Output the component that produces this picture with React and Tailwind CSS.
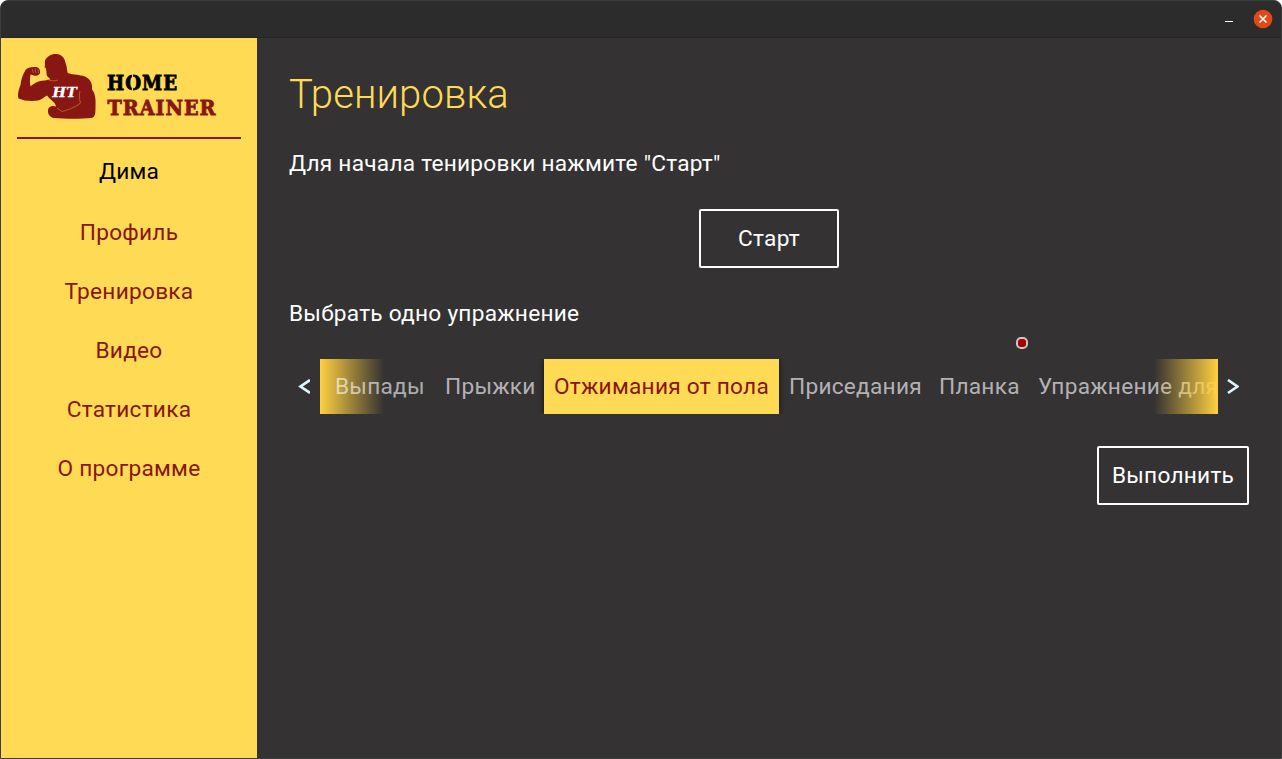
import React from "react";

const navItems = ["Профиль", "Тренировка", "Видео", "Статистика", "О программе"];

function Logo() {
  return (
    <svg className="block h-[66px] w-[80px] shrink-0" viewBox="17 53 80 66">
      <path
        fill="#881612"
        d="M45 60.500C47 56.500 51 54 55.500 54C60 54 63 56 64.500 59.500L66.500 66L67.500 72.500C69 74.500 76 74 80.500 75.500C87 76 91.500 80 92 86L92 89.500C95 93 96 99 95.500 106C95.500 113 95.500 117.500 91 118C82 119 65 119 54 118C50 117.500 47.500 114 48 110C48.500 106.500 52 105 56 106.500C56 103 50 99.500 47 95.500C44 97 43 99 38 100.500C32 101.500 24 101 18.500 98.500C17 95 19 89 20.500 85C21 80 22.500 75 25.500 70C27 67.500 32 66.500 36 67C39 67.500 40.500 70 40 73C39 75.500 37 76 34 75.500L30.500 74.500C30 78 29.500 82 30.500 86.500C34 83 40 80 45 80.500L50 79.500C51 79 49 78 48 77C47 76 46.500 75 46.500 73L46 68.500L44.500 67C45.500 65 44.500 63 45 60.500Z"
      />
      <path d="M80 91C79 95 79 98 80.500 103C76 107 68 110 62 111.500L57 108M47 79C50 81 54 81.500 58 80M32 69L33.500 73M35 68.500L36 73M38 69L38.500 73" fill="none" stroke="#d18a3b" strokeWidth="0.6" />
      <text x="52.500" y="97" fill="white" stroke="white" strokeWidth="0.3" fontFamily="DejaVu Serif" fontSize="13.500" fontWeight="700" fontStyle="italic" textLength="24.500" lengthAdjust="spacingAndGlyphs">HT</text>
    </svg>
  );
}

function Wordmark() {
  return (
    <svg className="ml-[9px] block h-[48px] w-[114px]" viewBox="106 72 114 48" fontFamily="DejaVu Serif" fontWeight="700">
      <text x="107" y="89.700" fontSize="19.500" fill="#000" stroke="#000" strokeWidth="0.8" textLength="71" letterSpacing="1" lengthAdjust="spacingAndGlyphs">HOME</text>
      <text x="107.500" y="114.700" fontSize="19.500" fill="#881612" stroke="#881612" strokeWidth="0.8" textLength="109" letterSpacing="1" lengthAdjust="spacingAndGlyphs">TRAINER</text>
      <path d="M132.500 74V78M132.500 87V91.500" stroke="#ffda55" strokeWidth="1.100" />
    </svg>
  );
}

function Sidebar() {
  return (
    <aside className="flex w-[256px] shrink-0 flex-col bg-[#ffda55] px-4 text-center text-[22.67px] leading-[27px] tracking-[0.25px] text-[#881612]">
      <div className="flex h-[99px] pt-[15px]">
        <Logo />
        <div className="pt-[19px]"><Wordmark /></div>
      </div>
      <div className="h-[2px] shrink-0 bg-[#881612]" />
      <div className="mt-[19px] text-black">Дима</div>
      <nav className="mt-[34px] flex flex-col gap-8">
        {navItems.map((t) => <a key={t}>{t}</a>)}
      </nav>
    </aside>
  );
}

function Chevron({ right }) {
  return (
    <svg className="h-[16px] w-[12px] shrink-0" viewBox="0 0 12 16" fill="none" stroke="#dcf6ff" strokeWidth="2.700">
      <path d={right ? "M1 1L10.500 7.500L1 14" : "M12 1L2.500 7.500L12 14"} />
    </svg>
  );
}

function Carousel() {
  return (
    <div className="relative mt-[32px] flex h-[55px] items-center pl-[9px]">
      <Chevron />
      <div className="relative ml-[10px] flex h-[55px] w-[898px] items-center overflow-hidden whitespace-nowrap text-[#b3b1b3]">
        <div className="absolute inset-y-0 left-0 w-[64px] bg-linear-to-r from-[#ffd041] to-[#ffd04100]" />
        <span className="relative ml-[15px] w-[110px] shrink-0 text-white/60">Выпады</span>
        <span className="w-[99px] shrink-0">Прыжки</span>
        <span className="flex h-[55px] w-[235px] shrink-0 items-center justify-center bg-[#ffda55] text-[#881612] shadow-[0_0_5px_#111]">Отжимания от пола</span>
        <span className="ml-[10px] w-[150px] shrink-0">Приседания</span>
        <span className="w-[99px] shrink-0">Планка</span>
        <span className="shrink-0">Упражнение для</span>
        <div className="absolute inset-y-0 right-0 w-[64px] bg-linear-to-l from-[#ffd041] to-[#ffd04100]" />
      </div>
      <div className="ml-[9px] flex"><Chevron right /></div>
      <span className="absolute left-[727px] top-[-22px] h-3 w-3 rounded-[5px] border-2 border-[#c8c8c8] bg-[#a90000]" />
    </div>
  );
}

export default function App() {
  return (
    <div className="h-[759px] w-[1282px] bg-white font-['Roboto',sans-serif]">
      <div className="flex h-full flex-col overflow-hidden rounded-t-[8px] border border-[#3c3c3c] bg-[#333]">
        <header className="flex h-[37px] shrink-0 items-center justify-end border-b border-[#242424] bg-[#2c2c2c] pr-[8px]">
          <span className="mr-[20px] mt-[5px] h-px w-2 bg-white" />
          <svg className="h-[20px] w-[20px]" viewBox="0 0 20 20">
            <circle cx="10" cy="10" r="9.300" fill="#e2491a" />
            <path d="M6.500 6.500L13.500 13.500M13.500 6.500L6.500 13.500" stroke="white" strokeWidth="1.500" />
          </svg>
        </header>
        <div className="flex min-h-0 flex-1">
          <Sidebar />
          <main className="flex flex-1 flex-col bg-[#343233] px-8 pt-[33px] text-[22.67px] leading-[27px] tracking-[0.25px] text-white">
            <h1 className="text-[40px] font-light leading-[48px] tracking-[0.1px] text-[#ffda55]">Тренировка</h1>
            <p className="mt-[31px]">Для начала тенировки нажмите "Старт"</p>
            <button className="mt-[32px] h-[59px] w-[140px] shrink-0 self-center rounded-[2px] border-2 border-white">Старт</button>
            <p className="mt-[32px]">Выбрать одно упражнение</p>
            <Carousel />
            <button className="mt-[32px] h-[59px] w-[152px] shrink-0 self-end rounded-[2px] border-2 border-white">Выполнить</button>
          </main>
        </div>
      </div>
    </div>
  );
}
